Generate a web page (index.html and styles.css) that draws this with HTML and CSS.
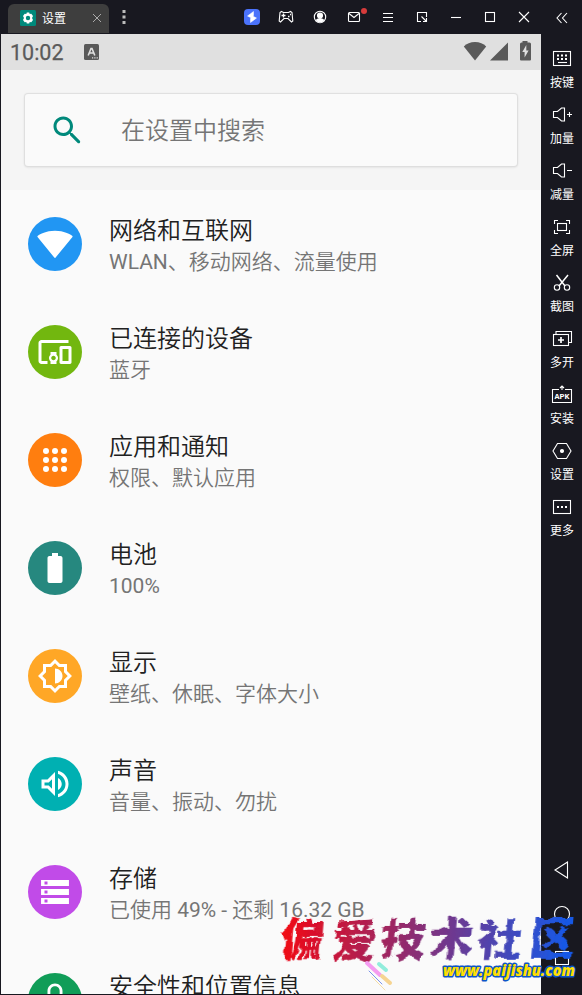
FILE: index.html
```html
<!DOCTYPE html>
<html lang="zh-CN">
<head>
<meta charset="utf-8">
<title>设置</title>
<link rel="stylesheet" href="styles.css">
</head>
<body>
<div class="window">
  <header class="titlebar">
    <div class="tab">
      <svg class="tab-icon" width="16" height="16" viewBox="0 0 16 16"><rect width="16" height="16" rx="1.500" fill="#00897b"/><path d="M6.800 2.500h2.400l.5 1.600 1.600-.4 1.700 2.300L12 8l1 2-1.700 2.300-1.600-.4-.5 1.600H6.800l-.5-1.600-1.600.4L3 10l1-2-1-2 1.700-2.300 1.600.4z" fill="#fff"/><circle cx="8" cy="8" r="2.200" fill="#00897b"/></svg>
      <span class="tab-name">设置</span>
      <svg class="tab-close" width="10" height="10" viewBox="0 0 10 10"><path d="M1 1l8 8M9 1L1 9" stroke="#aaa" fill="none"/></svg>
    </div>
    <svg class="dots" width="4" height="16" viewBox="0 0 4 16"><path d="M.5 1h3v3h-3zM.5 6.500h3v3h-3zM.5 12h3v3h-3z" fill="#bbb"/></svg>
    <nav class="tools">
      <svg viewBox="0 0 34 34"><rect x="9" y="9" width="16" height="16" rx="4" fill="#4b73fb"/><path d="M18.500 11.500l-6 4.500 4 2 2-2.500zM15.500 22.500l6-4.500-4-2-2 2.500z" fill="#fff" stroke="#fff" stroke-width=".5"/></svg>
      <svg class="line" viewBox="0 0 34 34"><path d="M12.500 11.500l2 1h5l2-1 1.500 1 .8 8.500-1.300 1-3.500-3.500h-4L11.500 22l-1.300-1 .8-8.500z"/><path d="M12.500 15.500h4M14.500 13.500v4M19 16.500h1.500M21 14.500h1" stroke-width="1.300"/></svg>
      <svg class="line" viewBox="0 0 34 34"><circle cx="17" cy="17" r="5.700"/><circle cx="17" cy="15.500" r="2.500" fill="#fff"/><path d="M12.500 20q4.500-4 9 0l-2 2h-5z" fill="#fff" stroke="none"/></svg>
      <svg class="line" viewBox="0 0 34 34"><rect x="11.500" y="12.500" width="11" height="9" rx="1"/><path d="M12 13.500l5 4 5-4"/><circle cx="27" cy="11" r="3" fill="#d63b3b" stroke="none"/></svg>
      <svg class="line" viewBox="0 0 34 34"><path d="M12 13.500h10M12 17.500h10M12 21.500h10"/></svg>
      <svg class="line" viewBox="0 0 34 34"><path d="M16 21.500h-3.500v-9h9V17M16.500 16.500l5 5M21.500 18v3.500H18"/></svg>
      <svg class="line" viewBox="0 0 34 34"><path d="M12 17.500h10"/></svg>
      <svg class="line" viewBox="0 0 34 34"><rect x="12.500" y="12.500" width="9" height="9"/></svg>
      <svg class="line" viewBox="0 0 34 34"><path d="M12 12l10 10M22 12L12 22"/></svg>
    </nav>
    <svg class="collapse line" width="41" height="34" viewBox="0 0 41 34"><path d="M20.500 13L16 18l4.500 5M26 13l-4.500 5 4.500 5"/></svg>
  </header>

  <div class="body">
    <main class="phone">
      <div class="status">
        <span class="clock">10:02</span>
        <svg class="ime" width="15" height="16" viewBox="0 0 15 16"><rect width="15" height="16" rx="1.500" fill="#5a5a5a"/><path d="M4.200 11.500L7 4.500h1l2.800 7M5.300 9h4.400" fill="none" stroke="#e0e0e0" stroke-width="1.600"/><path d="M8 13.200h1.200v1.200H8zM10.300 13.200h1.200v1.200h-1.200zM12.600 13.200h1.200v1.200h-1.200z" fill="#e0e0e0"/></svg>
        <svg class="signals" width="70" height="24" viewBox="0 0 70 24"><g fill="#5a5a5a"><path d="M12 21.500L.8 7.500Q5 3 12 3t11.200 4.500z"/><path d="M27 21.500h18v-18z"/><path d="M59.500 3.500V2h5v1.500h2q1.500 0 1.500 1.500v15.500q0 1-1 1H58q-1 0-1-1V5q0-1.500 1.500-1.500z"/></g><path d="M63.300 6l-4 7h2.300v5.500l4-7h-2.300z" fill="#e0e0e0"/></svg>
      </div>
      <div class="search-area">
        <div class="search">
          <svg width="36" height="36" viewBox="0 0 24 24"><path fill="#00897b" d="M15.500 14h-.79l-.28-.27C15.410 12.590 16 11.110 16 9.500 16 5.910 13.090 3 9.500 3S3 5.910 3 9.500 5.910 16 9.500 16c1.610 0 3.090-.59 4.230-1.570l.27.28v.79l5.300 5.300q.75.300 1.200-.2t.2-1.200zm-6 0C7.010 14 5 11.990 5 9.500S7.010 5 9.500 5 14 7.010 14 9.500 11.990 14 9.500 14z"/></svg>
          <span>在设置中搜索</span>
        </div>
      </div>
      <div class="list">
        <div class="row"><div class="disc blue"><svg viewBox="0 0 24 24"><path d="M12 21.500L23.640 7.300Q23.900 6.800 23.400 6.500C22 5.500 18 3.200 12 3.200S2 5.500.6 6.500Q.1 6.800.36 7.300L11.500 21q.5.600 1 0z"/></svg></div><div class="text"><div class="title">网络和互联网</div><div class="sub"><span class="latin">WLAN</span>、移动网络、流量使用</div></div></div>
        <div class="row"><div class="disc green"><svg viewBox="0 0 24 24"><path d="M3 6h18V4H3c-1.100 0-2 .9-2 2v12c0 1.100.9 2 2 2h4v-2H3V6zm10 6H9v1.780c-.61.55-1 1.330-1 2.220s.39 1.670 1 2.220V20h4v-1.780c.61-.55 1-1.340 1-2.220s-.39-1.670-1-2.220V12zm-2 5.500c-.83 0-1.500-.67-1.500-1.500s.67-1.500 1.500-1.500 1.500.67 1.500 1.500-.67 1.500-1.500 1.500zM22 8h-6c-.5 0-1 .5-1 1v10c0 .5.5 1 1 1h6c.5 0 1-.5 1-1V9c0-.5-.5-1-1-1zm-1 10h-4v-8h4v8z"/></svg></div><div class="text"><div class="title">已连接的设备</div><div class="sub">蓝牙</div></div></div>
        <div class="row"><div class="disc orange"><svg viewBox="0 0 24 24"><circle cx="6" cy="6" r="2"/><circle cx="12" cy="6" r="2"/><circle cx="18" cy="6" r="2"/><circle cx="6" cy="12" r="2"/><circle cx="12" cy="12" r="2"/><circle cx="18" cy="12" r="2"/><circle cx="6" cy="18" r="2"/><circle cx="12" cy="18" r="2"/><circle cx="18" cy="18" r="2"/></svg></div><div class="text"><div class="title">应用和通知</div><div class="sub">权限、默认应用</div></div></div>
        <div class="row"><div class="disc teal"><svg viewBox="0 0 24 24"><path d="M15.670 4H14V2h-4v2H8.330C7.600 4 7 4.600 7 5.330v15.330C7 21.400 7.600 22 8.330 22h7.330c.74 0 1.340-.6 1.340-1.330V5.330C17 4.600 16.400 4 15.670 4z"/></svg></div><div class="text"><div class="title">电池</div><div class="sub"><span class="latin">100%</span></div></div></div>
        <div class="row"><div class="disc amber"><svg viewBox="0 0 24 24"><path fill-rule="evenodd" d="M20 15.310L23.310 12 20 8.690V4h-4.690L12 .69 8.690 4H4v4.690L.69 12 4 15.310V20h4.690L12 23.310 15.310 20H20v-4.690zM18 14.480V18h-3.520L12 20.480 9.520 18H6v-3.520L3.520 12 6 9.520V6h3.520L12 3.520 14.480 6H18v3.520L20.480 12 18 14.480zM12 7v10c2.760 0 5-2.240 5-5s-2.240-5-5-5z"/></svg></div><div class="text"><div class="title">显示</div><div class="sub">壁纸、休眠、字体大小</div></div></div>
        <div class="row"><div class="disc cyan"><svg viewBox="0 0 24 24"><path d="M3 9v6h4l5 5V4L7 9H3zm7-.17v6.340L7.830 13H5v-2h2.830L10 8.830zM16.500 12c0-1.770-1.020-3.290-2.500-4.030v8.050c1.480-.73 2.500-2.250 2.500-4.020zM14 3.230v2.060c2.890.86 5 3.540 5 6.710s-2.110 5.850-5 6.710v2.060c4.010-.91 7-4.490 7-8.770 0-4.280-2.990-7.860-7-8.770z"/></svg></div><div class="text"><div class="title">声音</div><div class="sub">音量、振动、勿扰</div></div></div>
        <div class="row"><div class="disc purple"><svg viewBox="0 0 24 24"><path fill-rule="evenodd" d="M2.700 4h18.600v4H2.700zM5 5v2h2V5zM2.700 10h18.600v4H2.700zM5 11v2h2v-2zM2.700 16h18.600v4H2.700zM5 17v2h2v-2z"/></svg></div><div class="text"><div class="title">存储</div><div class="sub">已使用 <span class="latin">49% -</span> 还剩 <span class="latin">16.32 GB</span></div></div></div>
        <div class="row"><div class="disc emerald"><svg viewBox="0 0 24 24"><path d="M18 8h-1V6c0-2.760-2.240-5-5-5S7 3.240 7 6v2H6c-1.100 0-2 .9-2 2v10c0 1.100.9 2 2 2h12c1.100 0 2-.9 2-2V10c0-1.100-.9-2-2-2zM8.900 8V6c0-1.710 1.390-3.100 3.100-3.100s3.100 1.390 3.100 3.100v2z"/></svg></div><div class="text"><div class="title">安全性和位置信息</div></div></div>
      </div>
    </main>

    <aside class="side">
      <div class="item"><svg class="line" viewBox="0 0 24 24"><rect x="3.500" y="4.500" width="17" height="14"/><path d="M7 8.500h2m2 0h2m2 0h2M7 12h2m2 0h2m2 0h2" stroke-width="2"/><path d="M8 15.500h9"/></svg><span>按键</span></div>
      <div class="item"><svg class="line" viewBox="0 0 24 24"><path d="M3.500 8.500v6h4l4 3.500h3V5h-3l-4 3.500zM17 11.500h5M19.500 9v5"/></svg><span>加量</span></div>
      <div class="item"><svg class="line" viewBox="0 0 24 24"><path d="M3.500 8.500v6h4l4 3.500h3V5h-3l-4 3.500zM17 11.500h5"/></svg><span>减量</span></div>
      <div class="item"><svg class="line" viewBox="0 0 24 24"><path d="M8 5.500H4.500V9M16 5.500h3.500V9M4.500 15v3.500H8M19.500 15v3.500H16"/><rect x="7.500" y="8.500" width="9" height="7"/></svg><span>全屏</span></div>
      <div class="item"><svg class="line" viewBox="0 0 24 24"><path d="M6.500 4l8.500 11M18 4L9 15" stroke-width="1.500"/><circle cx="7" cy="16.500" r="2.700"/><circle cx="17" cy="16.500" r="2.700"/></svg><span>截图</span></div>
      <div class="item"><svg class="line" viewBox="0 0 24 24"><rect x="3.500" y="7.500" width="15" height="11"/><path d="M6 7V4.500h15.500v11H19"/><path d="M8 13h6M11 10v6" stroke-width="1.700"/></svg><span>多开</span></div>
      <div class="item"><svg class="line" viewBox="0 0 24 24"><path d="M9 6.500H2.500v13h19v-13H15M12 7V3M10 5l2-2 2 2"/><text x="12" y="16" class="apk" textLength="15" lengthAdjust="spacingAndGlyphs">APK</text></svg><span>安装</span></div>
      <div class="item"><svg class="line" viewBox="0 0 24 24"><path d="M7.500 4.500h9l4.500 7.500-4.500 7.500h-9L3 12z"/><circle cx="12" cy="12" r="1.500" fill="#fff"/></svg><span>设置</span></div>
      <div class="item"><svg class="line" viewBox="0 0 24 24"><rect x="3.500" y="5.500" width="17" height="13"/><path d="M7 12h2m2 0h2m2 0h2" stroke-width="2"/></svg><span>更多</span></div>
      <div class="keys">
        <svg class="line" viewBox="0 0 24 24"><path d="M17.500 4v16L5 12z"/></svg>
        <svg class="line" viewBox="0 0 24 24"><circle cx="12" cy="12" r="7.500"/></svg>
        <svg class="line" viewBox="0 0 24 24"><rect x="5.500" y="5.500" width="13" height="13"/></svg>
      </div>
    </aside>
  </div>

  <div class="watermark">
    <svg width="306" height="84" viewBox="0 0 306 84">
      <defs>
        <linearGradient id="ink" gradientUnits="userSpaceOnUse" x1="4" y1="0" x2="292" y2="0"><stop offset="0" stop-color="#f50611"/><stop offset=".5" stop-color="#853079"/><stop offset="1" stop-color="#1758e6"/></linearGradient>
        <filter id="brush" x="-5%" y="-20%" width="110%" height="140%"><feTurbulence type="fractalNoise" baseFrequency=".09" numOctaves="2" seed="4"/><feDisplacementMap in="SourceGraphic" scale="7" xChannelSelector="R" yChannelSelector="G"/></filter>
      </defs>
      <text class="brand" x="7 59 108 156 205 257" y="45 46 45 45 45 44" transform="skewX(-5)" fill="url(#ink)" filter="url(#brush)">偏爱技术社区</text>
      <g fill="none" stroke-linecap="round"><path d="M91 52l13 12" stroke="#f59bf0" stroke-width="4"/><path d="M103 53l7 6" stroke="#91eddc" stroke-width="4"/><path d="M106 65l8 7" stroke="#f6d491" stroke-width="4"/><path d="M93 60l13 13" stroke="#7b93e8"/><path d="M96 66l13 13" stroke="#f5dda5"/></g>
      <text class="url" x="167" y="65" textLength="132" lengthAdjust="spacingAndGlyphs">www.paijishu.com</text>
    </svg>
  </div>
</div>
</body>
</html>
```
FILE: styles.css
```css
* { box-sizing: border-box; }
body { margin: 0; background: #181820; font-family: Roboto, "Noto Sans CJK SC", sans-serif; }
svg { display: block; flex: none; }
.window { position: relative; width: 582px; height: 995px; overflow: hidden; background: #181820; }
.line { fill: none; stroke: #fff; stroke-width: 1.1; }

.titlebar { display: flex; height: 34px; }
.tab { display: flex; align-items: center; width: 101px; height: 29px; margin: 4px 0 0 8px; padding: 0 7px 0 12px; border-radius: 6px 6px 0 0; background: #3e3e3e; }
.tab-icon { margin-top: -1px; }
.tab-name { flex: 1; margin-left: 6px; color: #fff; font-size: 12px; line-height: 28px; }
.tab-close { margin-top: -1px; }
.dots { margin: 9px 0 0 13px; }
.tools { display: flex; margin-left: auto; }
.tools svg { width: 34px; height: 34px; }

.body { display: flex; height: 961px; }
.phone { display: flex; flex-direction: column; width: 540px; height: 960px; margin-left: 1px; overflow: hidden; background: #fafafa; }
.status { display: flex; align-items: center; flex: none; height: 36px; padding: 0 8px 0 9px; background: #e0e0e0; }
.clock { width: 74px; color: #5a5a5a; font-size: 21.5px; font-weight: 400; line-height: 36px; padding-top: 2px; -webkit-text-stroke: .25px #5a5a5a; }
.signals { margin: -3px 0 0 auto; }
.search-area { flex: none; height: 120px; padding: 24px; background: #f5f5f5; }
.search { display: flex; align-items: center; height: 72px; padding-left: 24px; border-radius: 3px; background: #fafafa; box-shadow: 0 0 1px 1px #dedede, 0 1px 3px rgba(0,0,0,.12); }
.search span { margin: 2px 0 0 36px; color: #757575; font-size: 24px; font-weight: 350; line-height: 36px; }

.row { display: flex; height: 108px; padding-left: 27px; }
.disc { display: flex; align-items: center; justify-content: center; flex: none; width: 54px; height: 54px; margin-top: 27px; border-radius: 50%; }
.disc svg { width: 36px; height: 36px; fill: #fff; }
.blue { background: #2196f3; }
.green { background: #72b70f; }
.orange { background: #ff7e0f; }
.teal { background: #26887f; }
.amber { background: #ffa726; }
.cyan { background: #00b0b2; }
.purple { background: #c14be8; }
.emerald { background: #109d58; }
.text { margin: 25px 0 0 27px; white-space: nowrap; }
.title { color: #212121; font-size: 24px; line-height: 32px; }
.sub { margin-top: -1px; color: #757575; font-size: 21px; line-height: 32px; }
.title, .sub { font-weight: 350; }
.latin { font-weight: 400; }

.side { display: flex; flex-direction: column; width: 41px; height: 961px; padding-top: 13px; }
.item { display: flex; flex-direction: column; align-items: center; height: 56px; flex: none; padding-left: 1px; color: #fff; font-size: 12px; line-height: 16px; }
.item svg { width: 24px; height: 24px; }
.item span { margin-top: 4px; }
.apk { fill: #fff; stroke: none; font: 700 8px "Liberation Mono", monospace; text-anchor: middle; }
.keys { display: flex; flex-direction: column; align-items: center; gap: 20px; margin-top: auto; padding: 0 0 25px 1px; }
.keys svg { width: 24px; height: 24px; }

.watermark { position: absolute; left: 276px; top: 911px; }
.brand { font: 900 44px "Noto Sans CJK SC", sans-serif; }
.url { font: italic 800 16px "Open Sans", sans-serif; fill: #ffdf00; stroke: #0b55c8; stroke-width: 3px; paint-order: stroke; stroke-linejoin: round; }
```
